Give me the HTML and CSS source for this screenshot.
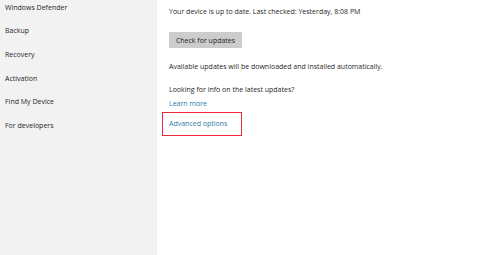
FILE: index.html
```html
<!DOCTYPE html>
<html>
<head>
<meta charset="utf-8">
<link rel="stylesheet" href="styles.css">
</head>
<body>
<div class="app">
  <nav class="side">
    <div class="item">Windows Defender</div>
    <div class="item">Backup</div>
    <div class="item">Recovery</div>
    <div class="item">Activation</div>
    <div class="item">Find My Device</div>
    <div class="item">For developers</div>
  </nav>
  <main class="main">
    <p class="status">Your device is up to date. Last checked: Yesterday, 8:08 PM</p>
    <button class="btn">Check for updates</button>
    <p class="auto">Available updates will be downloaded and installed automatically.</p>
    <p class="info">Looking for info on the latest updates?</p>
    <a class="link learn">Learn more</a>
    <div class="adv"><a class="link">Advanced options</a></div>
  </main>
</div>
</body>
</html>
```
FILE: styles.css
```css
html, body { margin: 0; padding: 0; }
body {
  width: 502px; height: 255px; overflow: hidden;
  font-family: "Open Sans", "Noto Sans", sans-serif;
  font-size: 7px;
  color: #1f1f1f;
  background: #fff;
}
.app { display: flex; height: 255px; }
.side {
  width: 157px; flex: none;
  background: #f2f2f2;
  display: flex; flex-direction: column;
  padding-top: 2.5px;
  box-sizing: border-box;
}
.item { height: 23.7px; line-height: 10px; padding-left: 5px; flex: none; }
.main {
  flex: 1;
  display: flex; flex-direction: column; align-items: flex-start;
  padding-left: 12px;
}
p { margin: 0; line-height: 10px; }
.status { margin-top: 7px; }
.btn {
  margin-top: 15px;
  width: 73px; height: 16px;
  background: #cccccc; border: none; padding: 0;
  font: inherit; color: #1f1f1f;
}
.auto { margin-top: 14px; }
.info { margin-top: 13px; }
.link { color: #2b7ba4; text-decoration: none; line-height: 10px; }
.learn { margin-top: 4px; }
.adv {
  margin-top: 3px; margin-left: -7px;
  width: 80px; height: 24px; box-sizing: border-box;
  border: 1px solid #ee2a3a;
  padding-left: 6px; padding-top: 6px;
  display: flex;
}
```
